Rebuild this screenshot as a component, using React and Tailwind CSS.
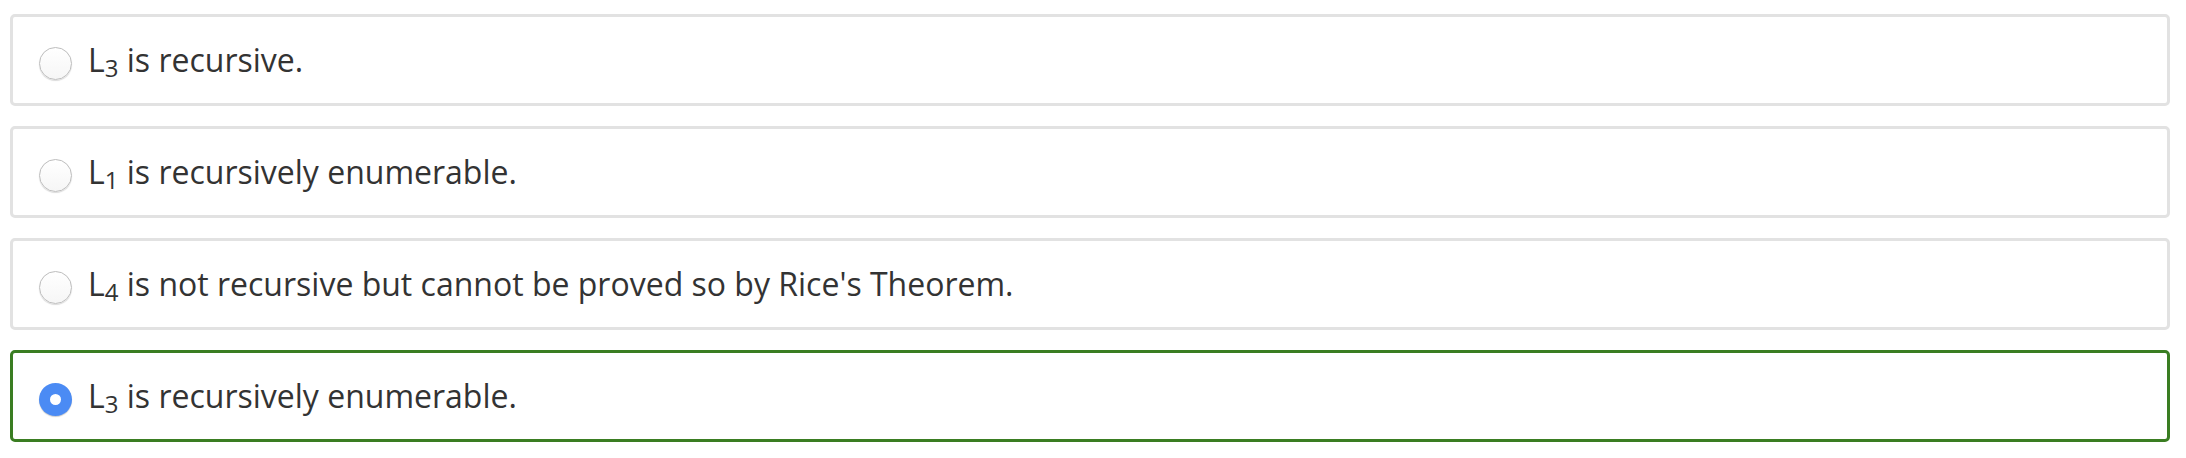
import React from "react";

const options = [
  { sub: "3", text: "is recursive.", selected: false },
  { sub: "1", text: "is recursively enumerable.", selected: false },
  { sub: "4", text: "is not recursive but cannot be proved so by Rice's Theorem.", selected: false },
  { sub: "3", text: "is recursively enumerable.", selected: true },
];

function Radio({ selected }) {
  if (selected) {
    return (
      <span className="mt-[7px] flex h-[33px] w-[33px] shrink-0 items-center justify-center rounded-full bg-[#4b8bf4] shadow-[0_1px_1px_rgba(0,0,0,0.2)]">
        <span className="h-[11px] w-[11px] rounded-full bg-white" />
      </span>
    );
  }
  return (
    <span className="mt-[7px] block h-[33px] w-[33px] shrink-0 rounded-full border border-[#bdbdbd] bg-gradient-to-b from-white to-[#f6f6f6] shadow-[0_1px_1px_rgba(0,0,0,0.15)]" />
  );
}

export default function App() {
  return (
    <div className="min-h-[458px] bg-white pt-[14px] pl-[10px] font-['Open_Sans',sans-serif]">
      <div className="flex w-[2160px] flex-col gap-[20px]">
        {options.map((o, i) => (
          <div
            key={i}
            className={
              "flex h-[92px] items-center rounded-[5px] border-[3px] bg-white pl-[26px] " +
              (o.selected ? "border-[#3a7d22]" : "border-[#e2e2e2]")
            }
          >
            <Radio selected={o.selected} />
            <span className="ml-[16px] whitespace-nowrap text-[32px] leading-none text-[#333333]">
              L<span className="relative bottom-[-5px] text-[24px]">{o.sub}</span> {o.text}
            </span>
          </div>
        ))}
      </div>
    </div>
  );
}
